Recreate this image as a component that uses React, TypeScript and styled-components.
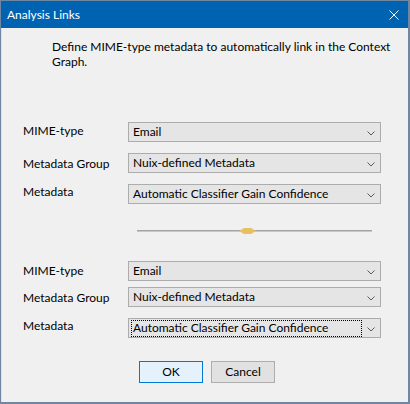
import React from 'react';
import styled, { createGlobalStyle } from 'styled-components';

const GlobalStyle = createGlobalStyle`
  html, body {
    margin: 0;
    padding: 0;
    background: #f0f0f0;
  }
  * {
    box-sizing: border-box;
  }
`;

const Window = styled.div`
  width: 410px;
  height: 404px;
  display: flex;
  flex-direction: column;
  background: #f0f0f0;
  border: 1px solid #6f87a2;
  border-right-width: 2px;
  border-bottom-width: 2px;
  font-family: 'Segoe UI', Lato, 'Noto Sans', sans-serif;
  font-size: 12px;
  color: #000;
`;

const TitleBar = styled.div`
  height: 27px;
  flex: none;
  display: flex;
  align-items: center;
  justify-content: space-between;
  padding: 0 8px 0 6px;
  background: #0063b1;
  color: #fff;
`;

const Title = styled.span`
  font-size: 12px;
  line-height: 27px;
`;

const CloseIcon = styled.svg`
  width: 10px;
  height: 10px;
  margin-right: 1px;
`;

const Body = styled.div`
  flex: 1;
  display: flex;
  flex-direction: column;
  border-left: 1px solid #d9e2ea;
  padding: 11px 0 0 21px;
`;

const Description = styled.p`
  margin: 0 0 53px 29px;
  line-height: 15px;
`;

const Form = styled.div<{ $top: number }>`
  display: grid;
  grid-template-columns: 105px 253px;
  margin-top: ${(p) => p.$top}px;
`;

const Row = styled.div<{ $gap: number; $lift?: number }>`
  display: contents;

  & > * {
    margin-top: ${(p) => p.$gap}px;
  }
  & > span {
    transform: translateY(-${(p) => p.$lift ?? 0}px);
  }
`;

const Label = styled.span`
  align-self: center;
  line-height: 15px;
`;

const Combo = styled.div<{ $focused?: boolean }>`
  position: relative;
  height: 20px;
  display: flex;
  align-items: center;
  padding: 0 0 0 3px;
  background: #e5e5e5;
  border: 1px solid #acacac;
  line-height: 14px;

  & > span {
    flex: 1;
    padding: 0 0 1px 1px;
    outline: ${(p) => (p.$focused ? '1px dotted #000' : 'none')};
    margin-right: 19px;
  }
`;

const Chevron = styled.svg`
  position: absolute;
  right: 5px;
  top: 8px;
  width: 8px;
  height: 5px;
`;

const Separator = styled.div`
  position: relative;
  width: 235px;
  height: 2px;
  margin: 26px 0 0 114px;
  background: #a3a3a3;
  border-bottom: 1px solid #c8c8c8;
`;

const Knob = styled.div`
  position: absolute;
  left: 102px;
  top: -2px;
  width: 17px;
  height: 6px;
  background: #e8c064;
  clip-path: polygon(0 50%, 30% 0, 70% 0, 100% 50%, 70% 100%, 30% 100%);
`;

const Buttons = styled.div`
  display: flex;
  gap: 8px;
  margin: 23px 0 0 116px;
`;

const Button = styled.button<{ $default?: boolean }>`
  width: 64px;
  height: 22px;
  padding: 0 0 1px;
  font: inherit;
  color: #000;
  background: ${(p) => (p.$default ? '#e5f1fb' : '#e1e1e1')};
  border: 1px solid ${(p) => (p.$default ? '#0078d7' : '#adadad')};
  border-radius: 0;
`;

type Field = { label: string; value: string; gap: number; lift?: number; focused?: boolean };

const firstGroup: Field[] = [
  { label: 'MIME-type', value: 'Email', gap: 0, lift: 2 },
  { label: 'Metadata Group', value: 'Nuix-defined Metadata', gap: 11 },
  { label: 'Metadata', value: 'Automatic Classifier Gain Confidence', gap: 11, lift: 3 },
];

const secondGroup: Field[] = [
  { label: 'MIME-type', value: 'Email', gap: 0, lift: 1 },
  { label: 'Metadata Group', value: 'Nuix-defined Metadata', gap: 6 },
  { label: 'Metadata', value: 'Automatic Classifier Gain Confidence', gap: 11, lift: 3, focused: true },
];

const FieldRows: React.FC<{ fields: Field[]; top: number }> = ({ fields, top }) => (
  <Form $top={top}>
    {fields.map((f) => (
      <Row key={f.label} $gap={f.gap} $lift={f.lift}>
        <Label>{f.label}</Label>
        <Combo $focused={f.focused}>
          <span>{f.value}</span>
          <Chevron viewBox="0 0 8 5">
            <path d="M0.5 0.5 L4 4 L7.5 0.5" fill="none" stroke="#5a5a5a" strokeWidth="1" />
          </Chevron>
        </Combo>
      </Row>
    ))}
  </Form>
);

const App: React.FC = () => {
  return (
    <>
      <GlobalStyle />
      <Window>
        <TitleBar>
          <Title>Analysis Links</Title>
          <CloseIcon viewBox="0 0 10 10">
            <path d="M0.5 0.5 L9.5 9.5 M9.5 0.5 L0.5 9.5" stroke="#fff" strokeWidth="1" />
          </CloseIcon>
        </TitleBar>
        <Body>
          <Description>
            Define MIME-type metadata to automatically link in the Context
            <br />
            Graph.
          </Description>
          <FieldRows fields={firstGroup} top={0} />
          <Separator>
            <Knob />
          </Separator>
          <FieldRows fields={secondGroup} top={29} />
          <Buttons>
            <Button $default>OK</Button>
            <Button>Cancel</Button>
          </Buttons>
        </Body>
      </Window>
    </>
  );
};

export default App;
